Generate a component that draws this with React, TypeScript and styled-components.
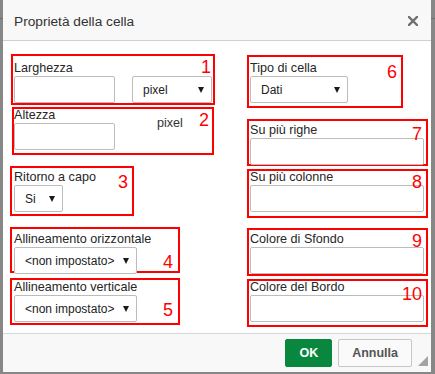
import styled, { createGlobalStyle } from "styled-components";

const GlobalStyle = createGlobalStyle`
  html, body {
    margin: 0;
    padding: 0;
  }
  body {
    background: #878787;
    font-family: "Liberation Sans", Arial, sans-serif;
    color: #262626;
  }
  * {
    box-sizing: border-box;
  }
`;

const Backdrop = styled.div`
  width: 435px;
  height: 374px;
  padding: 0 4px 2px 3px;
  background: linear-gradient(#878787 0 18px, #6f6f6f 18px 19px, #878787 19px);
`;

const Dialog = styled.section`
  position: relative;
  height: 372px;
  display: flex;
  flex-direction: column;
  background: #fff;
`;

const Header = styled.header`
  flex: none;
  height: 41px;
  display: flex;
  align-items: center;
  justify-content: space-between;
  padding: 3px 13px 0 11px;
  background: #f8f8f8;
  border-bottom: 1px solid #cfcfcf;
`;

const Title = styled.h1`
  margin: 0;
  font-size: 13.7px;
  font-weight: normal;
  line-height: 16px;
  color: #333;
`;

const Close = styled.button`
  display: flex;
  padding: 0;
  margin-top: -2px;
  border: 0;
  background: none;
  color: #707070;
  cursor: pointer;
`;

const Body = styled.main`
  flex: 1;
  display: grid;
  grid-template-columns: 237px 1fr;
  align-items: start;
  padding: 0 3px 0 7px;
`;

const Column = styled.div`
  display: flex;
  flex-direction: column;
  align-items: flex-start;
`;

const Group = styled.fieldset<{
  $mt: number;
  $ml?: number;
  $w: number;
  $h: number;
  $pt: number;
  $pl: number;
}>`
  position: relative;
  margin: ${(p) => p.$mt}px 0 0 ${(p) => p.$ml ?? 0}px;
  width: ${(p) => p.$w}px;
  height: ${(p) => p.$h}px;
  min-width: 0;
  padding: 0 0 0 ${(p) => p.$pl}px;
  border: 2px solid #f00;
  & > :first-child {
    margin-top: ${(p) => p.$pt}px;
  }
`;

const Label = styled.label`
  display: block;
  font-size: 12.6px;
  line-height: 16px;
  white-space: nowrap;
  color: #262626;
`;

const Row = styled.div<{ $gap?: number }>`
  display: flex;
  align-items: flex-start;
  gap: ${(p) => p.$gap ?? 0}px;
`;

const Stack = styled.div`
  display: flex;
  flex-direction: column;
`;

const Unit = styled.span`
  margin: 8px 0 0 42px;
  font-size: 12.6px;
  line-height: 16px;
  color: #333;
`;

const Input = styled.input<{ $w: number }>`
  display: block;
  width: ${(p) => p.$w}px;
  height: 27px;
  margin: 0;
  padding: 0 6px;
  border: 1px solid #bcbcbc;
  border-radius: 2px;
  background: #fff;
  font: 12px "Liberation Sans", Arial, sans-serif;
`;

const SelectBox = styled.div<{ $w: number }>`
  position: relative;
  width: ${(p) => p.$w}px;
  height: 27px;
`;

const Select = styled.select`
  appearance: none;
  display: block;
  width: 100%;
  height: 100%;
  margin: 0;
  padding: 0 0 0 10px;
  border: 1px solid #bcbcbc;
  border-radius: 2px;
  background: #fff;
  color: #222;
  font: 12px "Liberation Sans", Arial, sans-serif;
`;

const Arrow = styled.span`
  position: absolute;
  right: 8px;
  top: 11px;
  width: 0;
  height: 0;
  border-left: 3.5px solid transparent;
  border-right: 3.5px solid transparent;
  border-top: 6px solid #1a1a1a;
  pointer-events: none;
`;

const Badge = styled.span<{ $top: number; $right: number }>`
  position: absolute;
  top: ${(p) => p.$top}px;
  right: ${(p) => p.$right}px;
  font-size: 18px;
  line-height: 18px;
  color: #f00;
`;

const Footer = styled.footer`
  position: relative;
  flex: none;
  height: 39px;
  display: flex;
  justify-content: flex-end;
  align-items: flex-start;
  gap: 6px;
  padding: 5px 19px 0 0;
  background: #f8f8f8;
  border-top: 1px solid #d6d6d6;
`;

const Button = styled.button<{ $primary?: boolean }>`
  height: 28px;
  padding: 0 13px;
  border: 1px solid ${(p) => (p.$primary ? "#0a873f" : "#c6c6c6")};
  border-radius: 2px;
  background: ${(p) => (p.$primary ? "#0a873f" : "#fafafa")};
  color: ${(p) => (p.$primary ? "#fff" : "#555")};
  font: bold 12.5px "Liberation Sans", Arial, sans-serif;
  cursor: pointer;
`;

const Grip = styled.span`
  position: absolute;
  right: 3px;
  bottom: 6px;
  width: 0;
  height: 0;
  border-left: 10px solid transparent;
  border-bottom: 10px solid #a3a3a3;
`;

const Dropdown = ({ w, value }: { w: number; value: string }) => (
  <SelectBox $w={w}>
    <Select defaultValue={value}>
      <option>{value}</option>
    </Select>
    <Arrow />
  </SelectBox>
);

export default function App() {
  return (
    <>
      <GlobalStyle />
      <Backdrop>
        <Dialog>
          <Header>
            <Title>Proprietà della cella</Title>
            <Close aria-label="Chiudi">
              <svg width="10" height="10" viewBox="0 0 10 10">
                <path
                  d="M1 1 L9 9 M9 1 L1 9"
                  stroke="currentColor"
                  strokeWidth="2.4"
                  strokeLinecap="square"
                />
              </svg>
            </Close>
          </Header>
          <Body>
            <Column>
              <Group $mt={13} $ml={1} $w={204} $h={51} $pt={4} $pl={1}>
                <Label>Larghezza</Label>
                <Row $gap={17}>
                  <Input $w={101} />
                  <Dropdown w={80} value="pixel" />
                </Row>
                <Badge $top={2} $right={2}>1</Badge>
              </Group>
              <Group $mt={2} $ml={2} $w={202} $h={48} $pt={-2} $pl={0}>
                <Row>
                  <Stack>
                    <Label>Altezza</Label>
                    <Input $w={101} />
                  </Stack>
                  <Unit>pixel</Unit>
                </Row>
                <Badge $top={2} $right={3}>2</Badge>
              </Group>
              <Group $mt={11} $w={124} $h={50} $pt={1} $pl={2}>
                <Label>Ritorno a capo</Label>
                <Dropdown w={49} value="Si" />
                <Badge $top={5} $right={4}>3</Badge>
              </Group>
              <Group $mt={11} $w={170} $h={46} $pt={2} $pl={2}>
                <Label>Allineamento orizzontale</Label>
                <Dropdown w={123} value="<non impostato>" />
                <Badge $top={24} $right={5}>4</Badge>
              </Group>
              <Group $mt={5} $w={170} $h={47} $pt={-1} $pl={2}>
                <Label>Allineamento verticale</Label>
                <Dropdown w={123} value="<non impostato>" />
                <Badge $top={21} $right={5}>5</Badge>
              </Group>
            </Column>
            <Column>
              <Group $mt={14} $w={156} $h={53} $pt={3} $pl={1}>
                <Label>Tipo di cella</Label>
                <Dropdown w={98} value="Dati" />
                <Badge $top={6} $right={4}>6</Badge>
              </Group>
              <Group $mt={11} $w={181} $h={47} $pt={1} $pl={1}>
                <Label>Su più righe</Label>
                <Input $w={174} />
                <Badge $top={4} $right={4}>7</Badge>
              </Group>
              <Group $mt={3} $w={181} $h={49} $pt={-2} $pl={1}>
                <Label>Su più colonne</Label>
                <Input $w={174} />
                <Badge $top={2} $right={4}>8</Badge>
              </Group>
              <Group $mt={10} $w={181} $h={48} $pt={1} $pl={1}>
                <Label>Colore di Sfondo</Label>
                <Input $w={174} />
                <Badge $top={2} $right={4}>9</Badge>
              </Group>
              <Group $mt={3} $w={181} $h={48} $pt={-2} $pl={1}>
                <Label>Colore del Bordo</Label>
                <Input $w={174} />
                <Badge $top={4} $right={4}>10</Badge>
              </Group>
            </Column>
          </Body>
          <Footer>
            <Button $primary>OK</Button>
            <Button>Annulla</Button>
            <Grip />
          </Footer>
        </Dialog>
      </Backdrop>
    </>
  );
}
